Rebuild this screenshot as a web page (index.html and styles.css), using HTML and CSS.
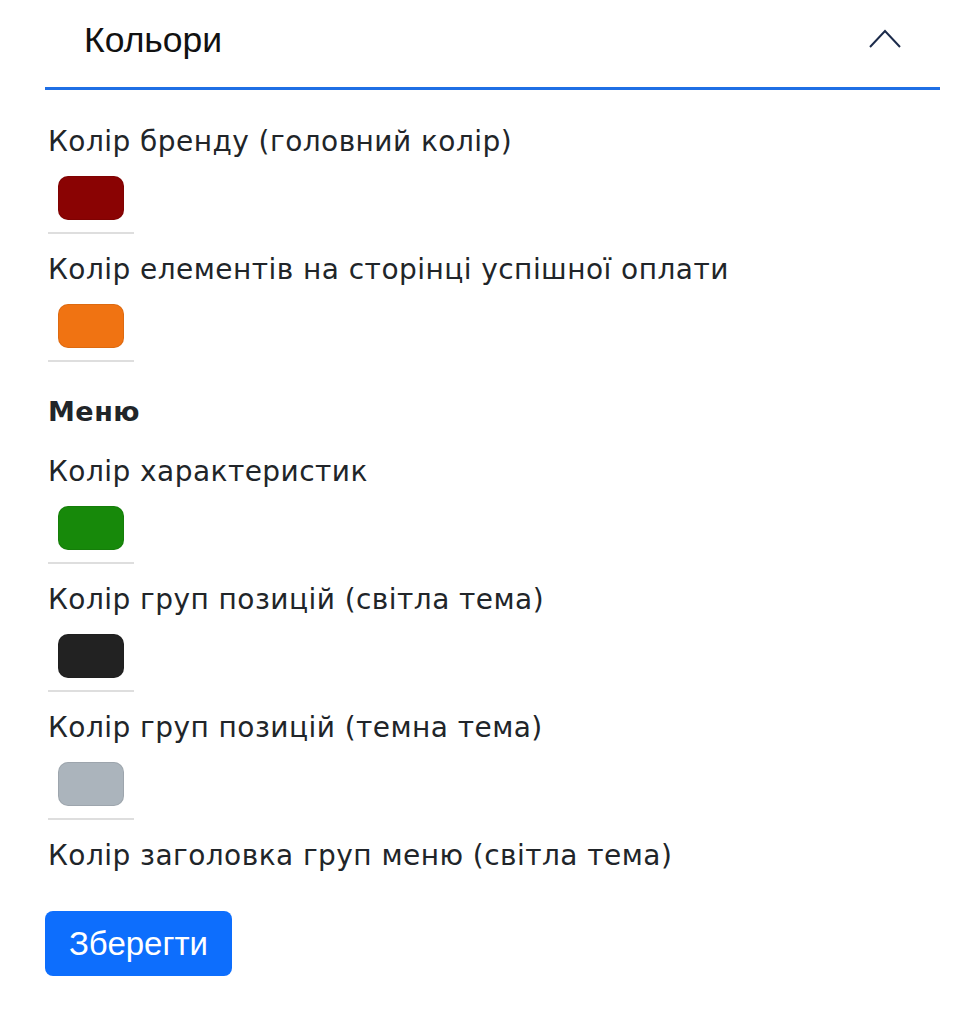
FILE: index.html
```html
<!DOCTYPE html>
<html lang="uk">
<head>
<meta charset="utf-8">
<title>Кольори</title>
<link rel="stylesheet" href="styles.css">
</head>
<body>
<div class="panel">
  <div class="acc-header">
    <span class="acc-title">Кольори</span>
    <svg class="chevron" width="34" height="22" viewBox="0 0 34 22"><path d="M2 19 L17 3 L32 19" fill="none" stroke="#1c2b4b" stroke-width="2"/></svg>
  </div>
  <div class="acc-body">
    <div class="field">
      <label class="label">Колір бренду (головний колір)</label>
      <div class="color-input"><span class="swatch" style="background:#8a0303"></span></div>
    </div>
    <div class="field">
      <label class="label">Колір елементів на сторінці успішної оплати</label>
      <div class="color-input"><span class="swatch" style="background:#f07312"></span></div>
    </div>
    <h3 class="section">Меню</h3>
    <div class="field">
      <label class="label">Колір характеристик</label>
      <div class="color-input"><span class="swatch" style="background:#17890a"></span></div>
    </div>
    <div class="field">
      <label class="label">Колір груп позицій (світла тема)</label>
      <div class="color-input"><span class="swatch" style="background:#222222"></span></div>
    </div>
    <div class="field">
      <label class="label">Колір груп позицій (темна тема)</label>
      <div class="color-input"><span class="swatch" style="background:#abb4bc"></span></div>
    </div>
    <div class="field last">
      <label class="label">Колір заголовка груп меню (світла тема)</label>
    </div>
    <button class="btn">Зберегти</button>
  </div>
</div>
</body>
</html>
```
FILE: styles.css
```css
html, body { margin: 0; padding: 0; background: #fff; }
body { font-family: "DejaVu Sans", "Noto Sans", sans-serif; color: #212529; }
.panel { margin-left: 45px; width: 895px; }
.acc-header {
  display: flex;
  align-items: center;
  justify-content: space-between;
  padding: 0 38px 6px 39px;
  box-sizing: border-box;
  height: 90px;
  border-bottom: 3px solid #1f6fe5;
}
.acc-title { font-family: "Liberation Sans", Arial, sans-serif; font-size: 35.5px; color: #111; }
.chevron { display: block; margin-top: -4px; }
.acc-body { padding-left: 3px; padding-top: 34px; }
.field { display: flex; flex-direction: column; align-items: flex-start; margin-bottom: 18px; }
.label { font-size: 28px; line-height: 36px; display: block; letter-spacing: 0.45px; }
.color-input {
  margin-top: 16px;
  width: 86px;
  box-sizing: border-box;
  padding: 0 10px 12px 10px;
  border-bottom: 2px solid #dedede;
}
.swatch { display: block; width: 66px; height: 44px; border-radius: 10px; box-shadow: inset 0 0 0 1px rgba(0,0,0,0.08); }
.section { font-size: 27px; font-weight: 700; line-height: 36px; margin: 32px 0 24px; letter-spacing: 0.5px; }
.field.last { margin-bottom: 37px; }
.btn {
  margin-left: -3px;
  width: 187px; height: 65px;
  background: #0d6efd; color: #fff; border: none; border-radius: 8px;
  font-family: "Liberation Sans", Arial, sans-serif; font-size: 33px;
  padding: 0;
}
```
